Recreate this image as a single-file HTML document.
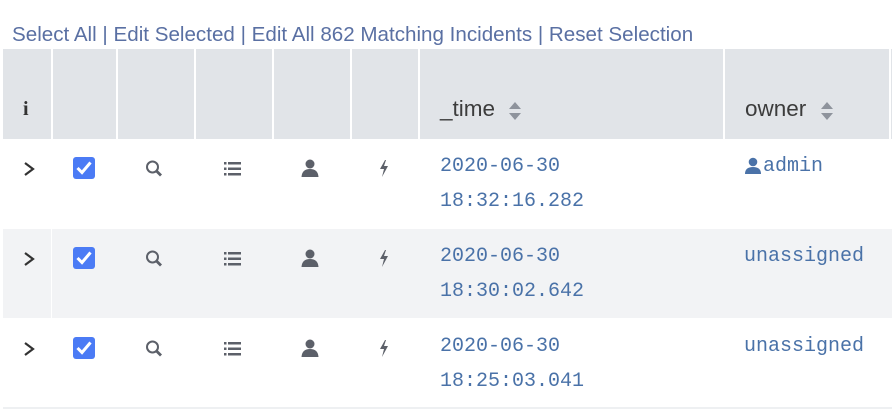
<!DOCTYPE html>
<html><head><meta charset="utf-8"><style>
*{margin:0;padding:0;box-sizing:border-box}
body{width:892px;height:409px;background:#fff;position:relative;overflow:hidden;font-family:"Liberation Sans",sans-serif}
.a{position:absolute}
.links{left:12px;top:23px;font-size:20.6px;color:#5a70a3;white-space:nowrap}
.hdr{left:3px;top:49px;width:889px;height:90px;background:#e1e4e8}
.vl{position:absolute;width:2px;background:#fff}
.row{left:3px;width:889px;height:89px}
.mono{font-family:"Liberation Mono",monospace;font-size:20px;color:#4a72a8;line-height:35px}
.ht{font-size:22.5px;color:#3c3c3c}
</style></head><body>
<div class="a links">Select All | Edit Selected | Edit All 862 Matching Incidents | Reset Selection</div>
<div class="a hdr"></div>
<div class="a row" style="top:139px;background:#fff"></div>
<div class="a row" style="top:229px;background:#f2f3f5"></div>
<div class="a row" style="top:319px;background:#fff;height:90px"></div>
<div class="a" style="left:3px;top:407px;width:889px;height:2px;background:#eef0f2"></div>
<div class="vl" style="left:51px;top:49px;height:90px"></div>
<div class="vl" style="left:116px;top:49px;height:90px"></div>
<div class="vl" style="left:194px;top:49px;height:90px"></div>
<div class="vl" style="left:272px;top:49px;height:90px"></div>
<div class="vl" style="left:350px;top:49px;height:90px"></div>
<div class="vl" style="left:418px;top:49px;height:90px"></div>
<div class="vl" style="left:723px;top:49px;height:90px"></div>
<div class="vl" style="left:889px;top:49px;height:90px"></div>
<div class="vl" style="left:51px;top:229px;height:90px;width:1px"></div>
<div class="a" style="left:23px;top:98px;font-family:'Liberation Serif',serif;font-weight:bold;font-size:20px;color:#333">i</div>
<div class="a ht" style="left:440px;top:96px">_time</div>
<div class="a ht" style="left:745px;top:96px">owner</div>
<svg class="a" style="left:508px;top:101px" width="14" height="20"><path d="M1 8 L7 1 L13 8Z M1 12 L7 19 L13 12Z" fill="#8e939c"/></svg>
<svg class="a" style="left:820px;top:101px" width="14" height="20"><path d="M1 8 L7 1 L13 8Z M1 12 L7 19 L13 12Z" fill="#8e939c"/></svg>

<svg class="a" style="left:0;top:139px" width="420" height="60">
<g id="ic">
<path d="M25 24 L33 30 L25 36" stroke="#333" stroke-width="2.2" fill="none"/>
<rect x="73" y="18" width="22" height="22" rx="3" fill="#4b7bf5"/>
<path d="M77.5 29 L82 33.5 L90.5 23.5" stroke="#fff" stroke-width="3" fill="none"/>
<circle cx="152.5" cy="28" r="5.5" stroke="#5c6069" stroke-width="2" fill="none"/>
<path d="M156.5 32 L161 36.5" stroke="#5c6069" stroke-width="2.8"/>
<rect x="224" y="23" width="2.5" height="2.5" fill="#5c6069"/><rect x="228" y="23" width="13" height="2.5" fill="#5c6069"/>
<rect x="224" y="28.5" width="2.5" height="2.5" fill="#5c6069"/><rect x="228" y="28.5" width="13" height="2.5" fill="#5c6069"/>
<rect x="224" y="34" width="2.5" height="2.5" fill="#5c6069"/><rect x="228" y="34" width="13" height="2.5" fill="#5c6069"/>
<circle cx="310" cy="25" r="4.5" fill="#5c6069"/>
<path d="M301.5 38 Q302 30 310 30 Q318 30 318.5 38Z" fill="#5c6069"/>
<path d="M385 21 L380 30 L384 30 L382 38 L388 27 L384 27 L386 21Z" fill="#5c6069"/>
</g></svg>
<svg class="a" style="left:0;top:229px" width="420" height="60"><use href="#ic"/></svg>
<svg class="a" style="left:0;top:319px" width="420" height="60"><use href="#ic"/></svg>

<div class="a mono" style="left:440px;top:149px">2020-06-30<br>18:32:16.282</div>
<div class="a mono" style="left:440px;top:239px">2020-06-30<br>18:30:02.642</div>
<div class="a mono" style="left:440px;top:329px">2020-06-30<br>18:25:03.041</div>
<svg class="a" style="left:744px;top:157px" width="18" height="18"><circle cx="9" cy="5" r="4.3" fill="#4a72a8"/><path d="M1 17 Q1 10 9 10 Q17 10 17 17Z" fill="#4a72a8"/></svg>
<div class="a mono" style="left:763px;top:149px">admin</div>
<div class="a mono" style="left:744px;top:239px">unassigned</div>
<div class="a mono" style="left:744px;top:329px">unassigned</div>
</body></html>
